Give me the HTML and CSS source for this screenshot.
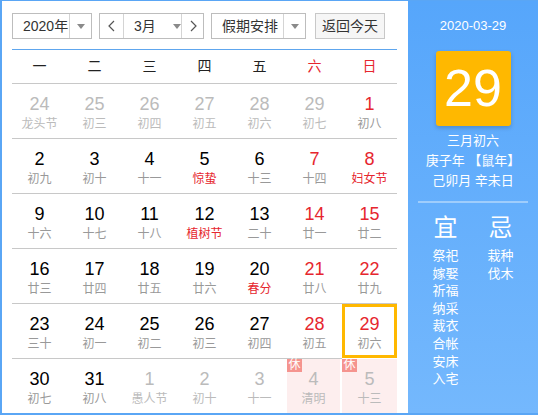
FILE: index.html
```html
<!DOCTYPE html>
<html lang="zh-CN">
<head>
<meta charset="utf-8">
<title>万年历</title>
<link rel="stylesheet" href="styles.css">
</head>
<body>
<div class="cal">
  <div class="main">
    <div class="toolbar">
      <div class="sel year"><span class="sel-text">2020年</span><span class="sel-arrow"><i class="tri"></i></span></div>
      <div class="sel month">
        <span class="nav"><svg width="7" height="12" viewBox="0 0 7 12"><polyline points="6,1 1,6 6,11" fill="none" stroke="#555" stroke-width="1.2"/></svg></span>
        <span class="month-mid"><span class="sel-text">3月</span><i class="tri"></i></span>
        <span class="nav"><svg width="7" height="12" viewBox="0 0 7 12"><polyline points="1,1 6,6 1,11" fill="none" stroke="#555" stroke-width="1.2"/></svg></span>
      </div>
      <div class="sel holiday"><span class="sel-text">假期安排</span><span class="sel-arrow"><i class="tri"></i></span></div>
      <div class="btn">返回今天</div>
    </div>
    <div class="week">
      <span>一</span><span>二</span><span>三</span><span>四</span><span>五</span><span class="red">六</span><span class="red">日</span>
    </div>
    <div class="grid">
      <div class="cell other"><b>24</b><em>龙头节</em></div>
      <div class="cell other"><b>25</b><em>初三</em></div>
      <div class="cell other"><b>26</b><em>初四</em></div>
      <div class="cell other"><b>27</b><em>初五</em></div>
      <div class="cell other"><b>28</b><em>初六</em></div>
      <div class="cell other"><b>29</b><em>初七</em></div>
      <div class="cell wk"><b>1</b><em>初八</em></div>

      <div class="cell"><b>2</b><em>初九</em></div>
      <div class="cell"><b>3</b><em>初十</em></div>
      <div class="cell"><b>4</b><em>十一</em></div>
      <div class="cell fest"><b>5</b><em>惊蛰</em></div>
      <div class="cell"><b>6</b><em>十三</em></div>
      <div class="cell wk"><b>7</b><em>十四</em></div>
      <div class="cell wk fest"><b>8</b><em>妇女节</em></div>

      <div class="cell"><b>9</b><em>十六</em></div>
      <div class="cell"><b>10</b><em>十七</em></div>
      <div class="cell"><b>11</b><em>十八</em></div>
      <div class="cell fest"><b>12</b><em>植树节</em></div>
      <div class="cell"><b>13</b><em>二十</em></div>
      <div class="cell wk"><b>14</b><em>廿一</em></div>
      <div class="cell wk"><b>15</b><em>廿二</em></div>

      <div class="cell"><b>16</b><em>廿三</em></div>
      <div class="cell"><b>17</b><em>廿四</em></div>
      <div class="cell"><b>18</b><em>廿五</em></div>
      <div class="cell"><b>19</b><em>廿六</em></div>
      <div class="cell fest"><b>20</b><em>春分</em></div>
      <div class="cell wk"><b>21</b><em>廿八</em></div>
      <div class="cell wk"><b>22</b><em>廿九</em></div>

      <div class="cell"><b>23</b><em>三十</em></div>
      <div class="cell"><b>24</b><em>初一</em></div>
      <div class="cell"><b>25</b><em>初二</em></div>
      <div class="cell"><b>26</b><em>初三</em></div>
      <div class="cell"><b>27</b><em>初四</em></div>
      <div class="cell wk"><b>28</b><em>初五</em></div>
      <div class="cell wk today"><b>29</b><em>初六</em></div>

      <div class="cell last"><b>30</b><em>初七</em></div>
      <div class="cell last"><b>31</b><em>初八</em></div>
      <div class="cell last other"><b>1</b><em>愚人节</em></div>
      <div class="cell last other"><b>2</b><em>初十</em></div>
      <div class="cell last other"><b>3</b><em>十一</em></div>
      <div class="cell last other rest sep"><span class="badge">休</span><b>4</b><em>清明</em></div>
      <div class="cell last other rest"><span class="badge">休</span><b>5</b><em>十三</em></div>
    </div>
  </div>
  <div class="side">
    <div class="date">2020-03-29</div>
    <div class="big">29</div>
    <div class="lunar">
      <div>三月初六</div>
      <div>庚子年 【鼠年】</div>
      <div>己卯月 辛未日</div>
    </div>
    <div class="divider"></div>
    <div class="yiji">
      <div class="col">
        <div class="head">宜</div>
        <div>祭祀</div><div>嫁娶</div><div>祈福</div><div>纳采</div><div>裁衣</div><div>合帐</div><div>安床</div><div>入宅</div>
      </div>
      <div class="col">
        <div class="head">忌</div>
        <div>栽种</div><div>伐木</div>
      </div>
    </div>
  </div>
</div>
</body>
</html>
```
FILE: styles.css
```css
* { box-sizing: border-box; }
html, body { margin: 0; padding: 0; background: #fff; }
body {
  font-family: "Liberation Sans", "Noto Sans CJK SC", sans-serif;
  color: #333;
}
.cal {
  width: 538px;
  height: 415px;
  display: flex;
  border-top: 1px solid #5aa6f5;
  border-left: 2px solid #5aa6f5;
  border-bottom: 2px solid #5aa6f5;
}
.main {
  width: 406px;
  padding: 12px 11px 0 10px;
  background: #fff;
}
.toolbar {
  display: flex;
  height: 26px;
  font-size: 14px;
  white-space: nowrap;
}
.sel {
  display: flex;
  border: 1px solid #bdbdbd;
  background: #fff;
  height: 26px;
  flex-shrink: 0;
}
.sel-text { line-height: 24px; color: #333; white-space: nowrap; flex-shrink: 0; }
.sel-arrow {
  display: flex;
  align-items: center;
  justify-content: center;
  border-left: 1px solid #d4d4d4;
}
.tri {
  display: block;
  flex-shrink: 0;
  width: 0; height: 0;
  border-left: 4px solid transparent;
  border-right: 4px solid transparent;
  border-top: 5px solid #8a8a8a;
}
.year { width: 80px; }
.year .sel-text { width: 56px; padding-left: 10px; }
.year .sel-arrow { flex: 1; }
.month { width: 105px; margin-left: 7px; }
.nav {
  width: 23px;
  flex-shrink: 0;
  display: flex;
  align-items: center;
  justify-content: center;
}
.month-mid {
  width: 59px;
  flex-shrink: 0;
  display: flex;
  align-items: center;
  border-left: 1px solid #d4d4d4;
  border-right: 1px solid #d4d4d4;
  padding-left: 10px;
}
.month-mid .tri { margin-left: 17px; }
.holiday { width: 95px; margin-left: 7px; }
.holiday .sel-text { width: 71px; padding-left: 10px; }
.holiday .sel-arrow { flex: 1; }
.btn {
  margin-left: 9px;
  width: 70px;
  height: 26px;
  border: 1px solid #c8c8c8;
  background: #f6f6f6;
  line-height: 24px;
  text-align: center;
  color: #333;
}
.week {
  margin-top: 10px;
  display: grid;
  grid-template-columns: repeat(7, 55px);
  border-top: 1px solid #5ea6ee;
  border-bottom: 1px solid #c8c8c8;
  height: 35px;
  align-items: center;
  font-size: 14px;
  color: #222;
}
.week span { text-align: center; line-height: 33px; }
.week .red { color: #e6262e; }
.grid {
  display: grid;
  grid-template-columns: repeat(7, 55px);
}
.cell {
  position: relative;
  height: 55px;
  border-bottom: 1px solid #c8c8c8;
  display: flex;
  flex-direction: column;
  align-items: center;
  padding-top: 10px;
}
.cell.last { height: 54px; border-bottom: 0; }
.cell b {
  font-weight: normal;
  font-size: 18px;
  line-height: 20px;
  color: #000;
}
.cell em {
  font-style: normal;
  font-size: 12px;
  line-height: 16px;
  margin-top: 2px;
  color: #999;
}
.cell.wk b { color: #e6262e; }
.cell.fest em { color: #e6262e; }
.cell.other b { color: #bbb; }
.cell.other em { color: #bbb; }
.cell.today {
  border: 3px solid #ffb800;
  height: 54px;
  padding-top: 7px;
}
.cell.rest { background: #fdeeee; }
.cell.sep { border-right: 2px solid #fff; }
.badge {
  position: absolute;
  left: 0; top: 0;
  width: 15px; height: 13px;
  background: #f5948f;
  color: #fff;
  font-size: 12px;
  line-height: 13px;
  text-align: center;
}
.side {
  width: 130px;
  background: linear-gradient(#56a6fb, #74b8fd);
  color: #fff;
  display: flex;
  flex-direction: column;
  align-items: center;
  padding-top: 15px;
}
.date { font-size: 13px; line-height: 20px; }
.big {
  margin-top: 15px;
  width: 75px;
  height: 75px;
  background: #ffb800;
  border-radius: 3px;
  box-shadow: 0 2px 4px rgba(0,0,0,0.18);
  font-size: 52px;
  line-height: 75px;
  text-align: center;
}
.lunar {
  margin-top: 5px;
  font-size: 13px;
  line-height: 20px;
  text-align: center;
}
.divider {
  margin-top: 10px;
  width: 110px;
  height: 2px;
  background: #9fcdfc;
}
.yiji {
  margin-top: 10px;
  display: grid;
  grid-template-columns: 52px 52px;
  column-gap: 3px;
  font-size: 13px;
  line-height: 17.6px;
  text-align: center;
}
.yiji .head {
  font-size: 24px;
  line-height: 30px;
  margin-bottom: 4px;
}
```
